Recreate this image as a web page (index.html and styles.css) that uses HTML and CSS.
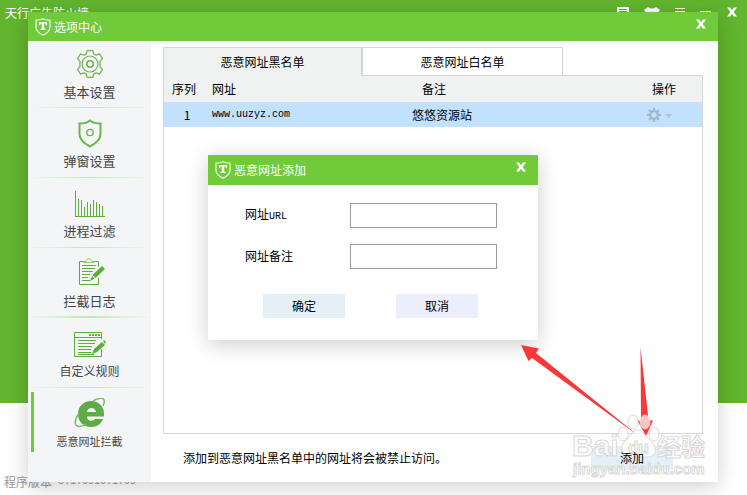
FILE: index.html
```
<!DOCTYPE html>
<html lang="zh-CN">
<head>
  <meta charset="UTF-8">
  <meta name="viewport" content="width=device-width, initial-scale=1.0">
  <title>选项中心</title>
  <link rel="stylesheet" href="styles.css">
</head>
<body>

<svg width="0" height="0" class="defs">
  <symbol id="logo" viewBox="0 0 16 18">
    <path d="M8 .8C5.800 2 3.500 2.300 1 2.200V9c0 3.800 3 6.300 7 8.200 4-1.900 7-4.400 7-8.200V2.200C12.500 2.300 10.200 2 8 .8z" fill="none" stroke="#e4f7d9" stroke-width="1.300"/>
    <path d="M4 4h8v3.200h-1.200L10.500 5.500H9.200v5.300h1.300V12h-5v-1.200h1.300V5.500H5.500L5.200 7.200H4z" fill="#fff"/>
  </symbol>
  <symbol id="close" viewBox="0 0 12 10">
    <path d="M1 .5h3.200L6 3.200 7.800.5H11L7.700 5 11 9.500H7.700L6 6.800 4.300 9.500H1L4.300 5z" fill="#fff"/>
  </symbol>
</svg>

<div class="app">
  <div class="app-main">
    <div class="app-bar">
      <span class="app-name">天行广告防火墙</span>
      <div class="app-icons">
        <svg width="12" height="10" viewBox="0 0 12 10"><path d="M0 0h12v10H0zM2 2v1h8V2zM2 4v4h8V4z" fill="#fff" fill-rule="evenodd"/></svg>
        <svg width="16" height="12" viewBox="0 0 16 12"><path d="M4 0q4 3 8 0l4 3-2 3-2-1v7H4V5L2 6 0 3z" fill="#fff"/></svg>
        <svg width="10" height="10" viewBox="0 0 10 10"><path d="M0 1.500h10M0 4.500h10M0 8.500h10" stroke="#fff"/></svg>
        <svg width="11" height="10" viewBox="0 0 11 10"><path d="M0 4.500h11" stroke="#fff"/></svg>
        <svg width="12" height="10"><use href="#close"/></svg>
      </div>
    </div>
  </div>
  <div class="app-footer">程序版本 <span class="latin">3.1.0910.1709</span></div>

  <div class="window">
    <div class="title-bar">
      <svg width="16" height="18"><use href="#logo"/></svg>
      <span class="title">选项中心</span>
      <button class="close" aria-label="关闭"><svg width="12" height="10"><use href="#close"/></svg></button>
    </div>

    <div class="window-body">
      <nav class="sidebar">
        <a href="#" class="item">
          <svg width="30" height="30" viewBox="0 0 30 30" fill="none" stroke="#6cb54b" stroke-width="1.200">
            <path d="M12.200 1.600h5.600l.9 3.300 2.400 1.300 3.300-1.300 3.100 4.800-2.400 2.500v5.600l2.400 2.500-3.100 4.800-3.300-1.300-2.400 1.300-.9 3.300h-5.600l-.9-3.300-2.400-1.300-3.300 1.300-3.100-4.800 2.400-2.500v-5.600L2.500 9.700l3.100-4.800 3.300 1.300 2.400-1.300z" stroke-linejoin="round"/>
            <circle cx="15" cy="15" r="8"/>
            <circle cx="15" cy="15" r="3.200" stroke-width="1.600"/>
          </svg>
          <span>基本设置</span>
        </a>
        <a href="#" class="item">
          <svg width="30" height="30" viewBox="0 0 30 30" fill="none" stroke="#6cb54b">
            <path d="M15 2.500C12 5 8 5.600 4.500 5.600V16c0 6 4.500 9.500 10.500 12.500C21 25.500 25.500 22 25.500 16V5.600C22 5.600 18 5 15 2.500z" stroke-width="2"/>
            <circle cx="15" cy="14.500" r="3.200" stroke-width="1.300"/>
          </svg>
          <span>弹窗设置</span>
        </a>
        <a href="#" class="item">
          <svg width="30" height="30" viewBox="0 0 30 30" fill="none" stroke="#5cae38">
            <path d="M.5 3v26M0 28.500h30M3.500 28V11M6.500 28V12M9.500 28v-9M12.500 28V14M15.500 28V16M18.500 28V12M21.500 28V14M24.500 28V16M27.500 28v-10"/>
          </svg>
          <span>进程过滤</span>
        </a>
        <a href="#" class="item">
          <svg width="30" height="30" viewBox="0 0 30 30" fill="none" stroke="#5cae38">
            <path d="M9 3.500H4.500v23h19V20M19 3.500h4.500V9"/>
            <path d="M9 4.500h10V3.500h-2c0-3.500-6-3.500-6 0H9z" stroke="#8cc774"/>
            <path d="M7 7.500h14M7 10.500h13M7 13.500h11M7 16.500h8M7 19.500h6M7 22.500h8"/>
            <path d="M27 8l3 3-9.500 9-3-3zM17 18l2.500 2.500L15 23z" fill="#5cae38" stroke="none"/>
          </svg>
          <span>拦截日志</span>
        </a>
        <a href="#" class="item wide">
          <svg width="34" height="30" viewBox="0 0 34 30" fill="none" stroke="#5cae38">
            <path d="M28.500 21v7.500h-27v-24h27V11M2 9.500h26"/>
            <path d="M16 7h11" stroke-width="2" stroke-dasharray="2 1"/>
            <path d="M5 12.500h18M5 15.500h17M5 18.500h14M5 21.500h13M5 24.500h13M5 26.500h16"/>
            <path d="M29 14l3 3-8 7-5 2 2-5zM30 13l1-1 2 2-1 2z" fill="#5cae38" stroke="none"/>
          </svg>
          <span>自定义规则</span>
        </a>
        <a href="#" class="item active">
          <svg width="32" height="30" viewBox="0 0 32 30">
            <path d="M17 3C9 3 4 9 4 16s5 13 13 13c6 0 10-3 12-8h-8c-2 2.500-8 2.500-8-2.500h17C31 9 25 3 17 3zM13 14c.5-5.500 8.500-5.500 9 0z" fill="#5fab48" fill-rule="evenodd"/>
            <path d="M19 3c5-3 10-4 11-1s-1 5-1 6M5 15c-4 6-5 12-2 13s6 0 9-2" fill="none" stroke="#79bc66" stroke-width="1.500"/>
          </svg>
          <span>恶意网址拦截</span>
        </a>
      </nav>

      <main class="content">
        <div class="tabs">
          <button class="tab selected">恶意网址黑名单</button>
          <button class="tab">恶意网址白名单</button>
        </div>
        <div class="list">
          <table>
            <thead>
              <tr>
                <th class="col-no">序列</th>
                <th class="col-url">网址</th>
                <th class="col-note">备注</th>
                <th class="col-action">操作</th>
              </tr>
            </thead>
            <tbody>
              <tr>
                <td class="col-no">1</td>
                <td class="col-url latin">www.uuzyz.com</td>
                <td class="col-note">悠悠资源站</td>
                <td class="col-action">
                  <svg width="28" height="14" viewBox="0 0 28 14">
                    <circle cx="7" cy="7" r="3.800" fill="none" stroke="#a3b6c6" stroke-width="2.200"/>
                    <path d="M7 0v3M7 11v3M0 7h3M11 7h3M2 2l2 2M10 10l2 2M2 12l2-2M10 4l2-2" stroke="#a3b6c6" stroke-width="2"/>
                    <path d="M18 6h7l-3.500 4z" fill="#a9c3da"/>
                  </svg>
                </td>
              </tr>
            </tbody>
          </table>
        </div>
        <div class="bottom">
          <span>添加到恶意网址黑名单中的网址将会被禁止访问。</span>
          <button class="btn add"><span>添加</span></button>
        </div>
      </main>
    </div>

    <div class="dialog" role="dialog" aria-label="恶意网址添加">
      <div class="title-bar">
        <svg width="16" height="18"><use href="#logo"/></svg>
        <span class="title">恶意网址添加</span>
        <button class="close" aria-label="关闭"><svg width="12" height="10"><use href="#close"/></svg></button>
      </div>
      <form>
        <div class="field">
          <label for="url">网址<span class="latin">URL</span></label>
          <input type="text" id="url">
        </div>
        <div class="field">
          <label for="note">网址备注</label>
          <input type="text" id="note">
        </div>
        <div class="buttons">
          <button type="button" class="btn">确定</button>
          <button type="button" class="btn cancel">取消</button>
        </div>
      </form>
    </div>

    <!-- arrows and watermark -->
    <svg class="marks" width="201" height="141" viewBox="517 341 201 141">
      <path d="M521 345l18 3.500-3 4.500L640 437 532 358l-3.500 3zM640.500 347l8 73 4.500.5-7 15.500-9-16 4 1.500z" fill="#fb3838"/>
      <g class="watermark">
        <text x="572" y="456" font-size="30">Bai</text>
        <ellipse cx="623" cy="434" rx="5" ry="7"/>
        <ellipse cx="633" cy="422" rx="5" ry="7"/>
        <ellipse cx="645" cy="422" rx="5" ry="7"/>
        <ellipse cx="654" cy="434" rx="5" ry="7"/>
        <path d="M638 430c-5 0-7 6-13 11-6 6-4 16 4 16h19c8 0 10-9 4-15-6-5-9-12-14-12z"/>
        <text x="628" y="453" font-size="17">du</text>
        <text x="657" y="456" font-size="24">经验</text>
        <text x="573" y="474" font-size="15">jingyan.baidu.com</text>
      </g>
    </svg>
  </div>
</div>

</body>
</html>
```
FILE: styles.css
```
* {
  box-sizing: border-box;
}

body {
  margin: 0;
  font-family: "Noto Sans CJK SC", sans-serif;
  font-size: 12px;
  line-height: 16px;
  color: #000;
}

button {
  font: inherit;
  color: inherit;
  padding: 0;
  border: none;
  background: none;
  cursor: pointer;
}

svg {
  display: block;
}

.defs {
  position: absolute;
}

.latin {
  font-family: "Liberation Mono", monospace;
  font-size: 10px;
}

/* main program behind the options window */
.app {
  position: relative;
  display: flex;
  flex-direction: column;
  min-height: 100vh;
  background: #fff;
}

.app-main {
  flex: 1;
  background: #62b52e;
}

.app-bar {
  display: flex;
  justify-content: space-between;
  padding: 5px 9px 0 5px;
  color: #fff;
}

.app-icons {
  display: flex;
  gap: 15px;
  padding-top: 2px;
}

.app-footer {
  display: flex;
  align-items: flex-end;
  gap: 6px;
  height: 92px;
  padding: 0 4px 5px;
  color: #999;
}

/* options window */
.window {
  position: absolute;
  top: 12px;
  right: 29px;
  bottom: 13px;
  left: 28px;
  display: flex;
  flex-direction: column;
  background: #fff;
  box-shadow: 0 4px 20px rgba(0, 0, 0, 0.2);
}

.title-bar {
  display: flex;
  align-items: center;
  gap: 3px;
  height: 29px;
  padding: 0 11px 0 7px;
  background: #70ca3a;
  color: #fff;
}

.close {
  margin-left: auto;
  padding-bottom: 6px;
}

.window-body {
  flex: 1;
  display: flex;
}

.sidebar {
  width: 123px;
  background: #f3f5f7;
}

.item {
  position: relative;
  display: flex;
  flex-direction: column;
  align-items: center;
  gap: 5px;
  padding: 10px 0 9px;
  font-size: 13px;
  color: #444;
  text-decoration: none;
  background: linear-gradient(to right, transparent, #c3e6b0, transparent) bottom / 100% 1px no-repeat;
}

.item:first-child {
  padding-top: 8px;
  padding-bottom: 8px;
}

.item:nth-child(4) {
  background-size: 100% 2px;
}

.item.wide {
  font-size: 12px;
}

.item.active {
  font-size: 11px;
  background: none;
}

.item.active::before {
  content: "";
  position: absolute;
  top: 4px;
  bottom: 6px;
  left: 3px;
  width: 3px;
  background: #70ca3a;
}

.content {
  flex: 1;
  display: flex;
  flex-direction: column;
  padding: 6px 15px 12px 12px;
}

.tabs {
  display: flex;
}

.tab {
  width: 200px;
  height: 28px;
  border: 1px solid #d5d7d7;
  border-bottom: none;
  border-left: none;
}

.tab.selected {
  height: 29px;
  margin-bottom: -1px;
  border-left: 1px solid #d5d7d7;
  border-right-width: 2px;
  background: #f0f2f2;
  position: relative;
}

.list {
  flex: 1;
  border: 1px solid #d5d7d7;
}

table {
  width: 100%;
  table-layout: fixed;
  border-collapse: collapse;
}

th,
td {
  height: 25px;
  padding: 0;
  font-weight: normal;
  text-align: left;
}

th {
  height: 26px;
  background: #f0f2f2;
}

td {
  background: #c1e1ff;
}

.col-no {
  width: 48px;
  text-align: center;
  padding-right: 8px;
}

td.col-no {
  padding-right: 2px;
}

.col-url {
  width: 200px;
}

th.col-note {
  padding-left: 10px;
}

.col-action {
  width: 60px;
  padding-left: 5px;
}

th.col-action {
  padding-left: 10px;
}

.bottom {
  display: flex;
  justify-content: space-between;
  align-items: center;
  padding: 12px 30px 0 20px;
}

.btn {
  width: 82px;
  height: 24px;
  background: #e5f0f6;
}

.btn.cancel {
  background: #eceefe;
}

/* caption stays readable over the watermark */
.btn.add span {
  position: relative;
  z-index: 1;
}

/* add dialog */
.dialog {
  position: absolute;
  inset: 0;
  margin: auto;
  width: 330px;
  height: fit-content;
  background: #fff;
  box-shadow: 0 4px 20px rgba(0, 0, 0, 0.2);
}

.dialog .title-bar {
  height: 30px;
}

.dialog form {
  padding: 18px 41px 22px 37px;
}

.field {
  display: flex;
  justify-content: space-between;
  align-items: center;
  margin-bottom: 16px;
}

.field input {
  width: 147px;
  height: 25px;
  border: 1px solid #9a9a9e;
  background: #fff;
}

.buttons {
  display: flex;
  gap: 51px;
  padding: 9px 0 0 18px;
}

.marks {
  position: absolute;
  right: 0;
  bottom: 0;
  pointer-events: none;
}

.watermark {
  font-family: "Liberation Sans", "Noto Sans CJK SC", sans-serif;
  font-weight: bold;
  fill: rgba(255, 255, 255, 0.7);
  stroke: #d8d8d8;
  stroke-width: 1px;
}
```
